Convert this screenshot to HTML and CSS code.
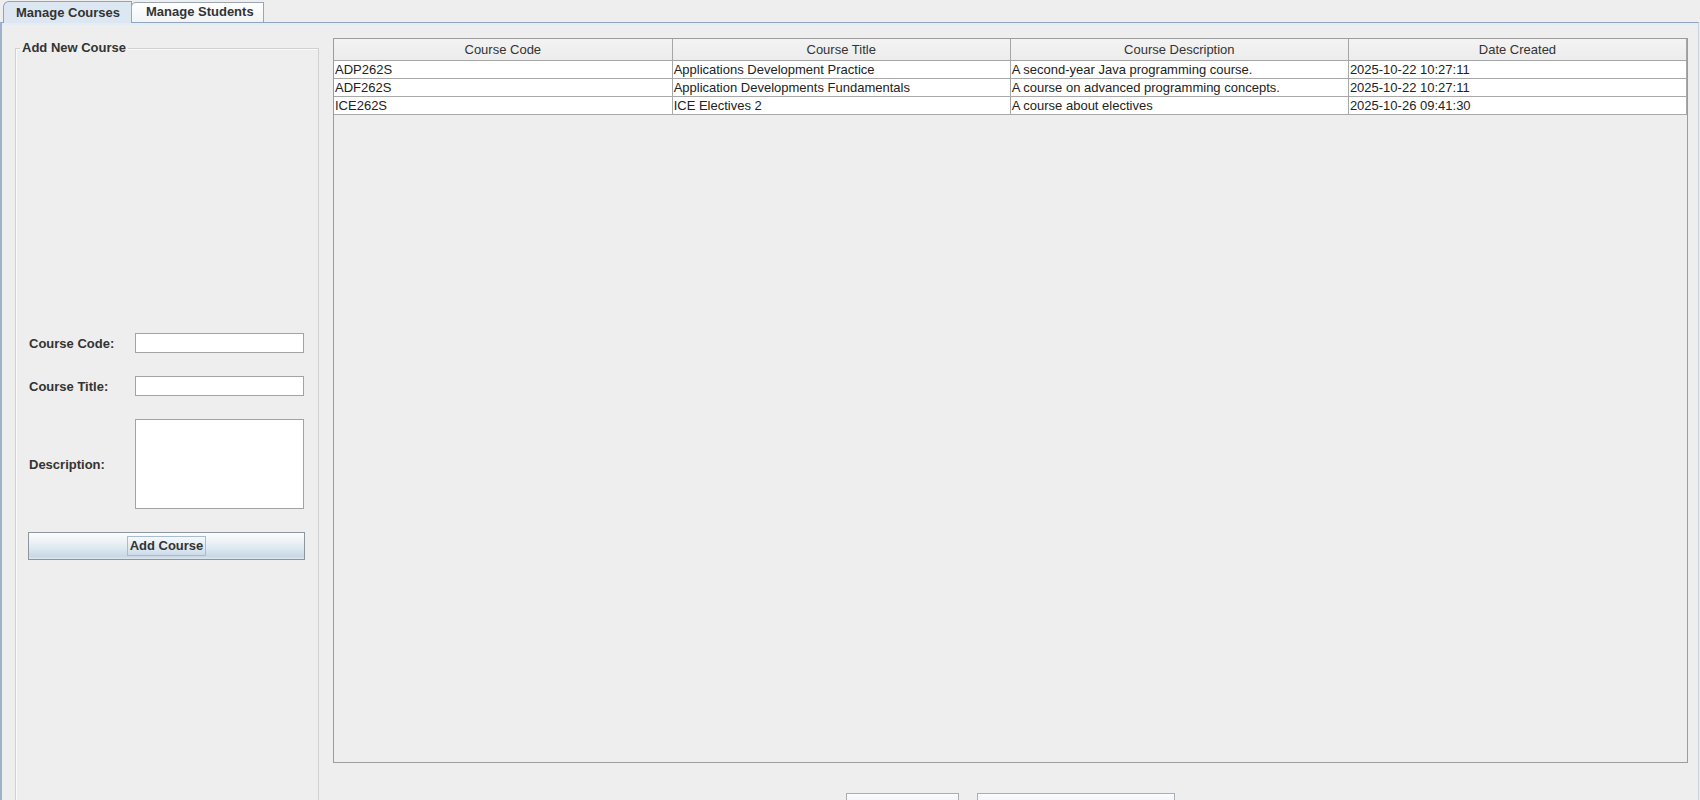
FILE: index.html
```html
<!DOCTYPE html>
<html>
<head>
<meta charset="utf-8">
<title>Course Management</title>
<link rel="stylesheet" href="styles.css">
</head>
<body>
<div class="tabs">
  <div class="tab tab-active">Manage Courses</div>
  <div class="tab">Manage Students</div>
</div>
<div class="panel">
  <div class="band"></div>
  <div class="content">
    <fieldset class="group">
      <legend>Add New Course</legend>
      <div class="form">
        <label class="lbl">Course Code:</label>
        <div class="field"></div>
        <label class="lbl">Course Title:</label>
        <div class="field"></div>
        <label class="lbl">Description:</label>
        <div class="field area"></div>
        <div class="btn-add"><span class="focus">Add Course</span></div>
      </div>
    </fieldset>
    <div class="right">
      <div class="scroll">
        <table class="grid">
          <thead>
            <tr><th>Course Code</th><th>Course Title</th><th>Course Description</th><th>Date Created</th></tr>
          </thead>
          <tbody>
            <tr><td>ADP262S</td><td>Applications Development Practice</td><td>A second-year Java programming course.</td><td>2025-10-22 10:27:11</td></tr>
            <tr><td>ADF262S</td><td>Application Developments Fundamentals</td><td>A course on advanced programming concepts.</td><td>2025-10-22 10:27:11</td></tr>
            <tr><td>ICE262S</td><td>ICE Electives 2</td><td>A course about electives</td><td>2025-10-26 09:41:30</td></tr>
          </tbody>
        </table>
      </div>
      <div class="actions">
        <div class="btn btn-small"></div>
        <div class="btn btn-wide"></div>
      </div>
    </div>
  </div>
</div>
</body>
</html>
```

FILE: styles.css
```css
html, body {
  margin: 0;
  padding: 0;
  height: 800px;
  overflow: hidden;
  background: #eeeeee;
  font-family: "Liberation Sans", Arial, sans-serif;
  font-size: 13px;
  color: #222222;
}

.tabs {
  display: flex;
  align-items: flex-end;
  height: 22px;
  padding-left: 3px;
  position: relative;
  z-index: 2;
}

.tab {
  box-sizing: border-box;
  height: 20px;
  padding: 0 0 0 14px;
  font-weight: bold;
  line-height: 18px;
  color: #333333;
  background: linear-gradient(to bottom, #ffffff, #f1f3f6);
  border: 1px solid #9aa6b4;
  border-bottom: none;
  border-top-left-radius: 5px;
  margin-left: -1px;
}

.tab:first-child { margin-left: 0; }

.tab-active {
  width: 129px;
  height: 22px;
  line-height: 21px;
  padding-left: 12px;
  background: #dce7f2;
  border-color: #8fa3bd;
  margin-bottom: -1px;
  border-top-left-radius: 6px;
}

.tab:not(.tab-active) { width: 133px; }

.panel {
  box-sizing: border-box;
  margin: 0 1px 0 0;
  height: 778px;
  border: 1px solid #8fa5c2;
  border-bottom: none;
  border-right-color: #c8d4e2;
  border-left-width: 2px;
  border-left-color: #9db2cc;
  position: relative;
  z-index: 1;
  overflow: hidden;
}

.band {
  height: 2px;
  background: #e4ecf4;
}

.content {
  display: flex;
  align-items: flex-start;
  padding: 13px 10px 0 13px;
  gap: 14px;
}

.group {
  box-sizing: border-box;
  width: 304px;
  height: 820px;
  margin: 2px 0 0 0;
  padding: 0;
  min-width: 0;
  border: 1px solid #d0d0d0;
  box-shadow: inset 1px 1px 0 #fafafa;
}

.group legend {
  margin-left: 4px;
  padding: 0 2px;
  font-weight: bold;
  line-height: 16px;
  color: #333333;
}

.form {
  display: grid;
  grid-template-columns: 106px 169px;
  grid-auto-rows: auto;
  row-gap: 23px;
  align-items: center;
  margin-top: 277px;
  padding-left: 13px;
}

.lbl {
  font-weight: bold;
  color: #333333;
}

.field {
  box-sizing: border-box;
  height: 20px;
  background: #ffffff;
  border: 1px solid #a3a3a3;
}

.field.area { height: 90px; }

.btn-add {
  grid-column: 1 / 3;
  box-sizing: border-box;
  margin-left: -1px;
  width: 277px;
  height: 28px;
  border: 1px solid #8e959c;
  background: linear-gradient(to bottom, #fbfdfe 0%, #eef3f8 30%, #d6e3ee 70%, #c9d8e5 90%, #dfe8f0 100%);
  display: flex;
  align-items: center;
  justify-content: center;
}

.focus {
  border: 1px solid #a9bccd;
  padding: 1px 2px;
  font-weight: bold;
  color: #333333;
  line-height: 16px;
}

.right {
  flex: 1;
  display: flex;
  flex-direction: column;
}

.scroll {
  box-sizing: border-box;
  height: 725px;
  border: 1px solid #9c9c9c;
  background: #eeeeee;
}

.grid {
  width: 100%;
  table-layout: fixed;
  border-collapse: collapse;
}

.grid th {
  height: 21px;
  padding: 0;
  font-weight: normal;
  color: #333333;
  text-align: center;
  background: linear-gradient(to bottom, #f3f3f3, #ececec);
  border-right: 1px solid #a6a6a6;
  border-bottom: 1px solid #a6a6a6;
}

.grid td {
  height: 17px;
  padding: 0 0 0 1px;
  background: #ffffff;
  color: #222222;
  border-right: 1px solid #a8a8a8;
  border-bottom: 1px solid #a8a8a8;
  white-space: nowrap;
  overflow: hidden;
  line-height: 17px;
}

.actions {
  display: flex;
  justify-content: center;
  gap: 18px;
  margin-top: 30px;
}

.btn {
  box-sizing: border-box;
  height: 28px;
  border: 1px solid #a8aeb4;
  background: linear-gradient(to bottom, #fbfdfe 0%, #eef3f8 35%, #d9e5ef 75%, #e3ebf2 100%);
}

.btn-small { width: 113px; }
.btn-wide { width: 198px; }
```
